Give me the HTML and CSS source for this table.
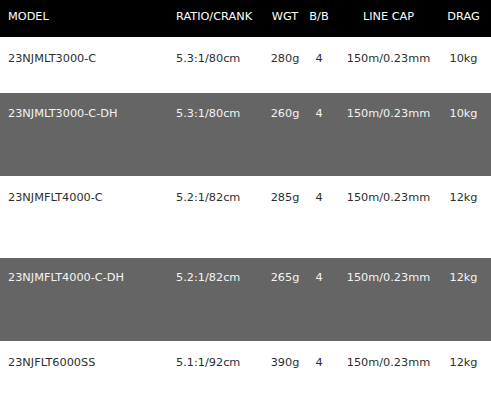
FILE: index.html
```html
<!DOCTYPE html>
<html>
<head>
<meta charset="utf-8">
<link rel="stylesheet" href="styles.css">
</head>
<body>
<div class="spec">
  <div class="row head">
    <div class="c model">MODEL</div>
    <div class="c ratio">RATIO/CRANK</div>
    <div class="c mid">WGT</div>
    <div class="c mid">B/B</div>
    <div class="c mid">LINE CAP</div>
    <div class="c mid">DRAG</div>
  </div>
  <div class="row light r1">
    <div class="c model">23NJMLT3000-C</div>
    <div class="c ratio">5.3:1/80cm</div>
    <div class="c mid">280g</div>
    <div class="c mid">4</div>
    <div class="c mid">150m/0.23mm</div>
    <div class="c mid">10kg</div>
  </div>
  <div class="row dark r2">
    <div class="c model">23NJMLT3000-C-DH</div>
    <div class="c ratio">5.3:1/80cm</div>
    <div class="c mid">260g</div>
    <div class="c mid">4</div>
    <div class="c mid">150m/0.23mm</div>
    <div class="c mid">10kg</div>
  </div>
  <div class="row light r3">
    <div class="c model">23NJMFLT4000-C</div>
    <div class="c ratio">5.2:1/82cm</div>
    <div class="c mid">285g</div>
    <div class="c mid">4</div>
    <div class="c mid">150m/0.23mm</div>
    <div class="c mid">12kg</div>
  </div>
  <div class="row dark r4">
    <div class="c model">23NJMFLT4000-C-DH</div>
    <div class="c ratio">5.2:1/82cm</div>
    <div class="c mid">265g</div>
    <div class="c mid">4</div>
    <div class="c mid">150m/0.23mm</div>
    <div class="c mid">12kg</div>
  </div>
  <div class="row light r5">
    <div class="c model">23NJFLT6000SS</div>
    <div class="c ratio">5.1:1/92cm</div>
    <div class="c mid">390g</div>
    <div class="c mid">4</div>
    <div class="c mid">150m/0.23mm</div>
    <div class="c mid">12kg</div>
  </div>
</div>
</body>
</html>
```
FILE: styles.css
```css
html, body {
  margin: 0;
  padding: 0;
  background: #fff;
}
.spec {
  width: 491px;
  font-family: "DejaVu Sans", Verdana, sans-serif;
  font-size: 11.3px;
  line-height: 14px;
}
.row {
  display: grid;
  grid-template-columns: 170px 98px 34px 34px 105px 45px;
  align-items: start;
  box-sizing: border-box;
}
.head {
  background: #000;
  color: #fff;
  height: 37px;
  padding-top: 10px;
}
.light {
  background: #fff;
  color: #2e2e2e;
  padding-top: 15px;
}
.dark {
  background: #656565;
  color: #f4f4f4;
  padding-top: 14px;
}
.r1 { height: 56px; }
.r2 { height: 83px; }
.r3 { height: 82px; }
.r4 { height: 83px; }
.r4 { padding-top: 13px; }
.r5 { height: 65px; }
.c {
  white-space: nowrap;
}
.model {
  padding-left: 8px;
}
.ratio {
  padding-left: 6px;
}
.mid {
  text-align: center;
}
```
